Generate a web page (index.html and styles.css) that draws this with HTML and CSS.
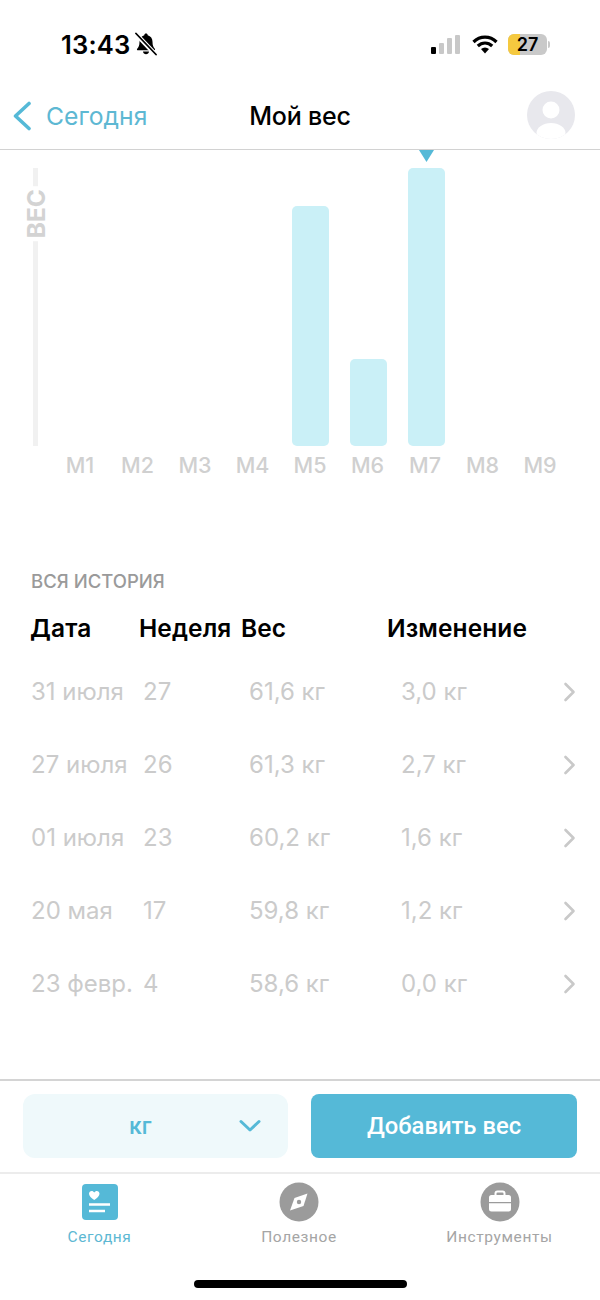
FILE: index.html
```html
<!DOCTYPE html>
<html lang="ru">
<head>
    <meta charset="UTF-8">
    <meta name="viewport" content="width=device-width, initial-scale=1.0">
    <title>Мой вес</title>
    <link rel="stylesheet" href="styles.css">
</head>
<body>
    <div class="status-bar">
        <div class="status-left">
            <span class="clock">13:43</span>
            <svg class="bell" width="22" height="24" viewBox="0 0 22 24">
                <path d="M11 1.500c-1 0-1.700.7-1.700 1.700C6.300 4 4.500 6.500 4.500 9.700c0 3.800-.8 5.500-2.300 7-.6.6-.2 1.600.7 1.600h16.200c.9 0 1.300-1 .7-1.600-1.500-1.500-2.300-3.200-2.300-7 0-3.200-1.800-5.700-4.800-6.500 0-1-.7-1.700-1.700-1.700z" fill="#000"/>
                <path d="M8 19.500h6c-.2 1.700-1.400 2.800-3 2.800s-2.800-1.100-3-2.800z" fill="#000"/>
                <path d="M1.500 2.500l19 20" stroke="#fff" stroke-width="4.500"/>
                <path d="M1 1.500l20 21" stroke="#000" stroke-width="1.800" stroke-linecap="round"/>
            </svg>
        </div>
        <div class="status-right">
            <div class="signal">
                <i class="on b1"></i><i class="b2"></i><i class="b3"></i><i class="b4"></i>
            </div>
            <svg class="wifi" width="26" height="20" viewBox="0 0 26 20">
                <path d="M1.500 8C8 1.500 18 1.500 24.500 8M5.800 12C10 8 16 8 20.200 12" fill="none" stroke="#000" stroke-width="3.200"/>
                <path d="M9 15c2.500-2 5.500-2 8 0l-4 4.500z" fill="#000"/>
            </svg>
            <div class="battery">
                <div class="battery-body"><span class="battery-fill"></span><span class="battery-num">27</span></div>
                <span class="battery-tip"></span>
            </div>
        </div>
    </div>

    <header class="nav">
        <a class="nav-back">
            <svg width="20" height="30" viewBox="0 0 20 30"><path d="M17 2.500L3.500 15 17 27.500" fill="none" stroke="#55b9d7" stroke-width="3.600" stroke-linecap="round" stroke-linejoin="round"/></svg>
            <span>Сегодня</span>
        </a>
        <div class="nav-title">Мой вес</div>
        <div class="avatar">
            <svg width="48" height="48" viewBox="0 0 48 48">
                <defs><clipPath id="avatar-clip"><circle cx="24" cy="24" r="24"/></clipPath></defs>
                <circle cx="24" cy="24" r="24" fill="#e8e8ed"/>
                <circle cx="24" cy="19" r="8.500" fill="#fff"/>
                <ellipse cx="24" cy="42" rx="14.500" ry="10" fill="#fff" clip-path="url(#avatar-clip)"/>
            </svg>
        </div>
    </header>

    <section class="chart">
        <div class="axis"><span class="axis-label">ВЕС</span></div>
        <div class="plot">
            <div class="col"><div class="slot"></div><span class="month">M1</span></div>
            <div class="col"><div class="slot"></div><span class="month">M2</span></div>
            <div class="col"><div class="slot"></div><span class="month">M3</span></div>
            <div class="col"><div class="slot"></div><span class="month">M4</span></div>
            <div class="col"><div class="slot slot-m5"><div class="bar" style="height: 240px"></div></div><span class="month">M5</span></div>
            <div class="col"><div class="slot slot-m6"><div class="bar" style="height: 87px"></div></div><span class="month">M6</span></div>
            <div class="col"><div class="slot slot-m7"><span class="marker"></span><div class="bar" style="height: 278px"></div></div><span class="month">M7</span></div>
            <div class="col"><div class="slot"></div><span class="month">M8</span></div>
            <div class="col"><div class="slot"></div><span class="month">M9</span></div>
        </div>
    </section>

    <section class="history">
        <h2 class="history-title">ВСЯ ИСТОРИЯ</h2>
        <div class="row head">
            <span>Дата</span><span>Неделя</span><span>Вес</span><span>Изменение</span>
        </div>
        <div class="row item">
            <span>31 июля</span><span class="c-week">27</span><span class="c-weight">61,6 кг</span><span class="c-change">3,0 кг</span>
            <svg class="chev" width="14" height="20" viewBox="0 0 14 20"><path d="M2.500 2l8 8-8 8" /></svg>
        </div>
        <div class="row item">
            <span>27 июля</span><span class="c-week">26</span><span class="c-weight">61,3 кг</span><span class="c-change">2,7 кг</span>
            <svg class="chev" width="14" height="20" viewBox="0 0 14 20"><path d="M2.500 2l8 8-8 8" /></svg>
        </div>
        <div class="row item">
            <span>01 июля</span><span class="c-week">23</span><span class="c-weight">60,2 кг</span><span class="c-change">1,6 кг</span>
            <svg class="chev" width="14" height="20" viewBox="0 0 14 20"><path d="M2.500 2l8 8-8 8" /></svg>
        </div>
        <div class="row item">
            <span>20 мая</span><span class="c-week">17</span><span class="c-weight">59,8 кг</span><span class="c-change">1,2 кг</span>
            <svg class="chev" width="14" height="20" viewBox="0 0 14 20"><path d="M2.500 2l8 8-8 8" /></svg>
        </div>
        <div class="row item">
            <span>23 февр.</span><span class="c-week">4</span><span class="c-weight">58,6 кг</span><span class="c-change">0,0 кг</span>
            <svg class="chev" width="14" height="20" viewBox="0 0 14 20"><path d="M2.500 2l8 8-8 8" /></svg>
        </div>
    </section>

    <div class="actions">
        <div class="unit-select">
            <span class="unit">кг</span>
            <svg class="unit-chev" width="22" height="14" viewBox="0 0 22 14"><path d="M2 2.500l9 8.500 9-8.500" fill="none" stroke="#55b9d7" stroke-width="3" stroke-linecap="round" stroke-linejoin="round"/></svg>
        </div>
        <button class="add-btn">Добавить вес</button>
    </div>

    <nav class="tabs">
        <div class="tab active">
            <svg width="40" height="40" viewBox="0 0 40 40">
                <rect x="2" y="2" width="36" height="36" rx="4" fill="#55b9d7"/>
                <path d="M14.250 18c-3-2-5.250-4-5.250-6.200 0-1.600 1.200-2.800 2.700-2.800 1 0 2 .6 2.550 1.500.55-.9 1.550-1.500 2.550-1.500 1.500 0 2.700 1.200 2.700 2.800 0 2.200-2.250 4.200-5.250 6.200z" fill="#fff"/>
                <path d="M9 22.500h21M9 29h16" stroke="#fff" stroke-width="2.400" fill="none"/>
            </svg>
            <span>Сегодня</span>
        </div>
        <div class="tab">
            <svg width="40" height="40" viewBox="0 0 40 40">
                <circle cx="20" cy="20" r="19.500" fill="#9b9b9b"/>
                <path d="M28.500 11.500L24.500 24 11 28.500 15.500 16z" fill="#fff"/>
                <circle cx="20" cy="20" r="2.200" fill="#9b9b9b"/>
            </svg>
            <span>Полезное</span>
        </div>
        <div class="tab">
            <svg width="40" height="40" viewBox="0 0 40 40">
                <circle cx="20" cy="20" r="19.500" fill="#9b9b9b"/>
                <path d="M15.500 13v-1.500a2 2 0 0 1 2-2h5a2 2 0 0 1 2 2V13" fill="none" stroke="#fff" stroke-width="2"/>
                <path d="M9 15.500a2.500 2.500 0 0 1 2.500-2.500h17a2.500 2.500 0 0 1 2.500 2.500V20H9z" fill="#fff"/>
                <path d="M9 21.200h22V27a2.500 2.500 0 0 1-2.500 2.500h-17A2.500 2.500 0 0 1 9 27z" fill="#fff"/>
            </svg>
            <span>Инструменты</span>
        </div>
    </nav>

    <div class="home-area"><div class="home-bar"></div></div>
</body>
</html>
```

FILE: styles.css
```css
* {
    box-sizing: border-box;
}

body {
    font-family: Inter, "Liberation Sans", sans-serif;
    background-color: #ffffff;
    color: #000000;
    margin: 0;
    width: 600px;
    height: 1300px;
    overflow: hidden;
}

/* status bar */
.status-bar {
    height: 80px;
    padding: 29px 50px 0 61px;
    display: flex;
    justify-content: space-between;
    align-items: flex-start;
}

.status-left {
    display: flex;
    align-items: center;
    gap: 4px;
    height: 30px;
}

.clock {
    font-size: 25.600px;
    font-weight: 600;
    letter-spacing: 0.2px;
}

.status-right {
    display: flex;
    align-items: center;
    height: 30px;
}

.signal {
    display: flex;
    align-items: flex-end;
    gap: 3px;
    height: 19px;
    margin-right: 12px;
}

.signal i {
    display: block;
    width: 5px;
    background-color: #c8c8c8;
    border-radius: 1px;
}

.signal .on { background-color: #000000; }
.signal .b1 { height: 7px; }
.signal .b2 { height: 11px; }
.signal .b3 { height: 16px; }
.signal .b4 { height: 19px; }

.wifi {
    margin-right: 10px;
}

.battery {
    display: flex;
    align-items: center;
}

.battery-body {
    position: relative;
    width: 39px;
    height: 21px;
    background-color: #c9c9c9;
    border-radius: 6px;
    overflow: hidden;
    text-align: center;
}

.battery-fill {
    position: absolute;
    left: 0;
    top: 0;
    bottom: 0;
    width: 12px;
    background-color: #f5c93f;
}

.battery-num {
    position: relative;
    font-size: 18px;
    font-weight: 600;
    line-height: 21px;
}

.battery-tip {
    width: 2px;
    height: 7px;
    margin-left: 1px;
    background-color: #c9c9c9;
    border-radius: 0 2px 2px 0;
}

/* nav */
.nav {
    height: 70px;
    padding: 2px 12px 0;
    border-bottom: 1px solid #d2d2d2;
    display: grid;
    grid-template-columns: 1fr auto 1fr;
    align-items: center;
}

.nav-back {
    display: flex;
    align-items: center;
    gap: 14px;
    color: #5db8d3;
    font-size: 24.700px;
}

.nav-title {
    font-size: 25px;
    font-weight: 500;
    letter-spacing: -0.2px;
}

.avatar {
    justify-self: end;
    height: 48px;
    margin: 0 13px 2px 0;
}

/* chart */
.chart {
    height: 344px;
    padding: 18px 0 0 33px;
    display: flex;
}

.axis {
    width: 5px;
    height: 278px;
    margin-right: 13.250px;
    background-color: #f1f1f1;
    display: flex;
    flex-direction: column;
    align-items: center;
}

.axis-label {
    writing-mode: vertical-rl;
    transform: rotate(180deg);
    margin-top: 18px;
    padding: 3px 0;
    background-color: #ffffff;
    color: #d3d3d3;
    font-size: 24.500px;
    font-weight: 700;
    line-height: 22px;
    flex-shrink: 0;
}

.plot {
    display: grid;
    grid-template-columns: repeat(9, 57.500px);
    height: 318px;
}

.col {
    display: flex;
    flex-direction: column;
    align-items: center;
}

.slot {
    position: relative;
    height: 278px;
    width: 37px;
    display: flex;
    align-items: flex-end;
}

/* bars sit a bit wider apart than the month labels */
.slot-m5 { margin-left: 1px; }
.slot-m6 { margin-left: 2px; }
.slot-m7 { margin-left: 3px; }

.bar {
    width: 100%;
    background-color: #caf0f7;
    border-radius: 5px;
}

.marker {
    position: absolute;
    left: 11px;
    top: -18px;
    width: 15px;
    height: 12px;
    background-color: #55b9d7;
    clip-path: polygon(0 0, 100% 0, 50% 100%);
}

.month {
    margin-top: 7px;
    font-size: 21.500px;
    font-weight: 500;
    line-height: 24px;
    color: #d0d0d0;
}

/* history */
.history {
    padding: 76px 0 0 31px;
    height: 585px;
}

.history-title {
    margin: 0;
    font-size: 18.500px;
    font-weight: 500;
    line-height: 22px;
    color: #9a9a9a;
}

.row {
    display: grid;
    grid-template-columns: 108px 102px 146px 176px 14px;
    align-items: center;
}

.head {
    margin-top: 21px;
    height: 30px;
    font-size: 24.500px;
    font-weight: 600;
    letter-spacing: 0.1px;
    white-space: nowrap;
}

.head span:first-child {
    margin-left: -1px;
}

.item {
    height: 73px;
    font-size: 24px;
    color: #cbcbcb;
    white-space: nowrap;
}

.head + .item {
    margin-top: 12.250px;
}

.c-week { padding-left: 4px; }
.c-weight { padding-left: 8px; }
.c-change { padding-left: 14px; }

.chev {
    fill: none;
    stroke: #c9c9c9;
    stroke-width: 2.600;
    stroke-linecap: round;
    stroke-linejoin: round;
}

/* bottom actions */
.actions {
    height: 95px;
    padding: 13px 23px 0;
    border-top: 2px solid #d4d4d4;
    border-bottom: 2px solid #ececec;
    display: flex;
    gap: 23px;
    font-family: Roboto, "Liberation Sans", sans-serif;
}

.unit-select {
    width: 265px;
    height: 64px;
    background-color: #eff9fb;
    border-radius: 12px;
    display: flex;
    align-items: center;
    padding-left: 106px;
    color: #55b9d7;
    font-size: 23px;
    font-weight: 500;
}

.unit-chev {
    margin-left: 88px;
}

.add-btn {
    width: 266px;
    height: 64px;
    border: none;
    border-radius: 8px;
    background-color: #55b9d7;
    color: #ffffff;
    font-family: inherit;
    font-size: 23.800px;
    font-weight: 500;
}

/* tab bar */
.tabs {
    display: grid;
    grid-template-columns: 199px 200px 201px;
    padding-top: 8px;
    font-family: Roboto, "Liberation Sans", sans-serif;
}

.tab {
    display: flex;
    flex-direction: column;
    align-items: center;
    gap: 5px;
    font-size: 15.500px;
    line-height: 20px;
    letter-spacing: 0.6px;
    color: #a5a5a5;
}

.tab.active {
    color: #5db8d3;
}

.home-area {
    padding-top: 33px;
    display: flex;
    justify-content: center;
}

.home-bar {
    width: 213px;
    height: 8px;
    border-radius: 4px;
    background-color: #000000;
}
```
